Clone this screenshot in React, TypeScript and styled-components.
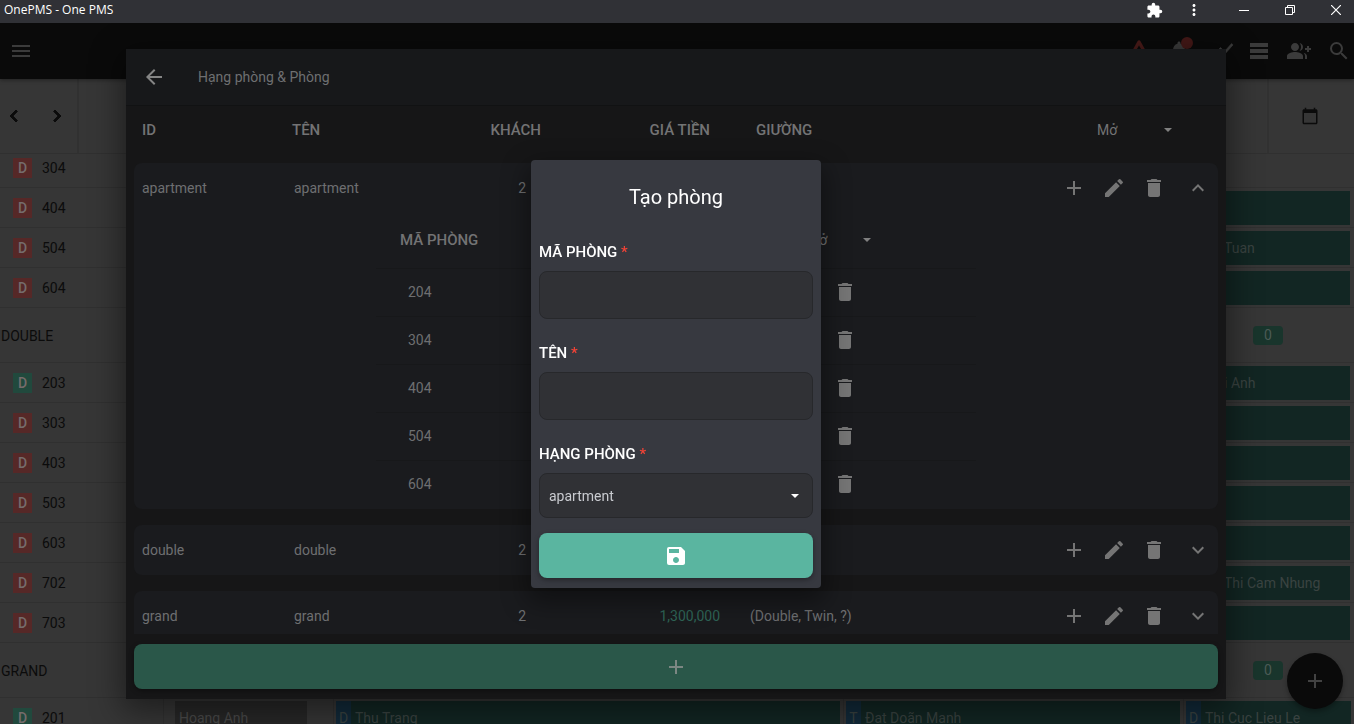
import React from 'react';
import styled, { createGlobalStyle } from 'styled-components';
import {
  MdAdd,
  MdArrowBack,
  MdCalendarToday,
  MdChevronLeft,
  MdChevronRight,
  MdDelete,
  MdEdit,
  MdExpandLess,
  MdExpandMore,
  MdExtension,
  MdGroupAdd,
  MdMenu,
  MdMoreVert,
  MdNotifications,
  MdSave,
  MdSearch,
  MdTableRows,
} from 'react-icons/md';

const GlobalStyle = createGlobalStyle`
  * { box-sizing: border-box; }
  html, body, #root { height: 100%; }
  body {
    margin: 0;
    overflow: hidden;
    background: #363636;
    color: #0b0b0b;
    font: 14px/20px Roboto, "Noto Sans", sans-serif;
  }
  button, input, select { font: inherit; color: inherit; }
  table { border-spacing: 0; }
`;

/* ---------- window frame ---------- */

const Window = styled.div`
  display: flex;
  flex-direction: column;
  height: 100vh;
`;

const TitleBar = styled.header`
  display: flex;
  align-items: center;
  flex: none;
  height: 23px;
  padding: 0 0 3px 4px;
  background: #303136;
  color: #fff;
  font: 12px/20px "Open Sans", "Noto Sans", sans-serif;
`;

const WindowTitle = styled.span`
  flex: 1;
`;

const WindowButtons = styled.div`
  display: flex;
  margin: 0 -5px 0 7px;
`;

const IconButton = styled.button<{ $w?: number; $h?: number }>`
  display: flex;
  align-items: center;
  justify-content: center;
  flex: none;
  width: ${(p) => p.$w ?? 40}px;
  height: ${(p) => p.$h ?? 40}px;
  padding: 0;
  border: 0;
  background: none;
  cursor: pointer;
`;

/* ---------- booking calendar behind the dialogs ---------- */

const Page = styled.main`
  position: relative;
  display: flex;
  flex-direction: column;
  flex: 1;
  min-height: 0;
  overflow: hidden;
`;

const AppBar = styled.nav`
  position: relative;
  z-index: 1;
  display: flex;
  align-items: center;
  flex: none;
  height: 56px;
  padding: 0 0 0 1px;
  background: #0a0a0a;
  color: #3b3b3b;
  box-shadow: 0 1px 4px rgba(0, 0, 0, 0.4);
`;

const Spacer = styled.div`
  flex: 1;
`;

const AppActions = styled.div`
  display: flex;
  margin-right: -5px;
`;

const AlertButton = styled(IconButton)`
  color: #4a1b19;
`;

const BellWrap = styled.span`
  position: relative;
  display: flex;
`;

const BellDot = styled.span`
  position: absolute;
  top: -2px;
  right: -2px;
  width: 12px;
  height: 12px;
  border-radius: 50%;
  background: #441817;
`;

const DateBar = styled.div`
  display: flex;
  flex: none;
  height: 75px;
  border-bottom: 1px solid #303030;
`;

const DateNav = styled.div`
  display: flex;
  align-items: center;
  justify-content: space-between;
  width: 79px;
  border-right: 2px solid #313131;

  path:last-child { stroke-width: 1px; }
`;

const DatePick = styled.div`
  display: flex;
  align-items: center;
  justify-content: center;
  width: 87px;
  padding-right: 4px;
  border-left: 2px solid #313131;
`;

const Rooms = styled.div`
  flex: 1;
  min-height: 0;
  overflow: hidden;
`;

const RoomList = styled.div`
  margin-top: -6px;
`;

const RoomRow = styled.div<{ $group?: boolean }>`
  display: flex;
  height: ${(p) => (p.$group ? 55 : 40)}px;
  border-bottom: 1px solid #303030;
`;

const RoomLabel = styled.div<{ $group?: boolean }>`
  display: flex;
  align-items: center;
  gap: 10px;
  flex: none;
  width: 163px;
  padding: ${(p) => (p.$group ? '2px 0 0 1px' : '0 0 0 13px')};
`;

const StateChip = styled.span<{ $clean?: boolean }>`
  width: 19px;
  height: 20px;
  background: ${(p) => (p.$clean ? '#21493d' : '#562827')};
  color: #756c6c;
  font-weight: 500;
  text-align: center;
`;

const Timeline = styled.div`
  display: grid;
  grid-template-columns: 170fr 510fr 340fr 171fr;
  flex: 1;
`;

const Slot = styled.div`
  display: flex;
  align-items: center;
  grid-column: 4;
  padding: 0 4px 0 3px;
`;

const Track = styled(Slot)<{ $inset?: boolean }>`
  grid-column: auto;
  padding: 2px ${(p) => (p.$inset ? '26px' : '3px')} 2px ${(p) => (p.$inset ? '11px' : '2px')};
  border-left: 1px solid #303030;
`;

const Booking = styled.div<{ $grey?: boolean; $cut?: boolean }>`
  display: flex;
  align-items: center;
  flex: 1;
  height: 34px;
  overflow: hidden;
  padding-left: ${(p) => (p.$grey ? 4 : p.$cut ? 38 : 0)}px;
  background: ${(p) => (p.$grey ? '#272727' : '#122623')};
  color: ${(p) => (p.$grey ? '#4a4a4a' : '#3a4341')};
  white-space: nowrap;
`;

const Source = styled.span`
  width: 15px;
  margin-right: 4px;
  background: #122a3a;
  line-height: 34px;
  text-align: center;
`;

const Count = styled.span`
  width: 30px;
  margin: 0 auto;
  border-radius: 4px;
  background: #19352c;
  color: #4c5b56;
  line-height: 19px;
  text-align: center;
`;

const Fab = styled.button`
  position: absolute;
  right: 11px;
  bottom: 15px;
  display: flex;
  align-items: center;
  justify-content: center;
  width: 56px;
  height: 56px;
  padding: 0;
  border: 0;
  border-radius: 50%;
  background: #0a0a0a;
  color: #424242;
  box-shadow: 0 3px 5px rgba(0, 0, 0, 0.3);
`;

/* ---------- room classes panel ---------- */

const Overlay = styled.div<{ $center?: boolean }>`
  position: absolute;
  inset: 0;
  z-index: 2;
  display: flex;
  justify-content: center;
  align-items: ${(p) => (p.$center ? 'center' : 'stretch')};
  padding: 26px 26px 25px 24px;
`;

const Panel = styled.section`
  display: flex;
  flex-direction: column;
  width: 100%;
  max-width: 1100px;
  background: #161617;
  color: #6e6f71;
  box-shadow: 0 8px 30px 4px rgba(0, 0, 0, 0.45);
`;

const PanelHead = styled.div`
  display: flex;
  align-items: center;
  flex: none;
  gap: 24px;
  height: 57px;
  padding-left: 8px;
  border-bottom: 1px solid #111213;
  background: #17181a;
`;

const BackButton = styled(IconButton)`
  color: #858585;
`;

const PanelTitle = styled.h1`
  margin: 0;
  font-size: 14px;
  font-weight: 400;
`;

const PanelScroll = styled.div`
  flex: 1;
  min-height: 0;
  margin: 0 8px;
  overflow: auto;
  scrollbar-width: none;
`;

const ClassTable = styled.table`
  display: block;
`;

const HeadRows = styled.thead`
  position: sticky;
  top: 0;
  display: block;
  background: #161617;
`;

const HeadRow = styled.tr`
  display: grid;
  grid-template-columns: 150px 150px 99px 169px minmax(0, 1fr) 83px;
  align-items: center;
  height: 57px;
  padding: 0 38px 10px 8px;
`;

const Th = styled.th<{ $right?: boolean; $pad?: number }>`
  padding: 0 0 0 ${(p) => p.$pad ?? 0}px;
  color: #737374;
  font-size: 15px;
  font-weight: 500;
  text-align: ${(p) => (p.$right ? 'right' : 'left')};
`;

const Card = styled.tbody`
  display: block;
  margin-bottom: 16px;
  padding: 1px 0;
  border-radius: 8px;
  background: #1a1b1e;
`;

const ClassRow = styled.tr`
  display: grid;
  grid-template-columns: 152px 150px 82px 194px minmax(0, 1fr) auto;
  align-items: center;
  height: 48px;
  padding-left: 8px;
`;

const Td = styled.td<{ $right?: boolean; $pad?: number; $price?: boolean }>`
  padding: 0 0 0 ${(p) => p.$pad ?? 0}px;
  color: ${(p) => (p.$price ? '#2f6557' : 'inherit')};
  text-align: ${(p) => (p.$right ? 'right' : 'left')};
`;

const ActionCell = styled.td`
  display: flex;
  padding: 0;
  color: #757575;
`;

const ExpandButton = styled(IconButton)`
  margin-left: 4px;
`;

const NestedRow = styled.tr`
  display: flex;
  justify-content: center;
`;

const NestedCell = styled.td`
  flex: 0 1 600px;
  padding: 0;
`;

const RoomTable = styled.table`
  display: block;
`;

const RoomRows = styled.tbody`
  display: block;
`;

const RoomGrid = styled.tr<{ $head?: boolean }>`
  display: grid;
  grid-template-columns: minmax(0, 1fr) 72px 97px;
  align-items: center;
  height: ${(p) => (p.$head ? 56 : 48)}px;
  padding-left: ${(p) => (p.$head ? 24 : 32)}px;
  box-shadow: ${(p) => (p.$head ? 'none' : 'inset 0 1px #17181a')};
`;

const RoomAction = styled.td`
  display: flex;
  justify-content: flex-end;
  grid-column: 2 / 4;
  padding: 0 111px 0 0;
  color: #757575;
`;

const PanelFoot = styled.div`
  flex: none;
  padding: 10px 8px;
`;

const WideButton = styled.button<{ $bright?: boolean }>`
  display: flex;
  align-items: center;
  justify-content: center;
  width: 100%;
  height: 45px;
  padding: 0;
  border: 0;
  border-radius: 8px;
  background: ${(p) => (p.$bright ? '#5ab5a0' : '#2a5749')};
  color: ${(p) => (p.$bright ? '#fff' : '#7c8783')};
  box-shadow: 0 2px 5px rgba(0, 0, 0, 0.35);
`;

/* ---------- selects: the caret shares the grid cell of the control ---------- */

const SelectBox = styled.span<{ $field?: boolean }>`
  display: grid;
  align-items: center;
  width: 100%;
  color: ${(p) => (p.$field ? '#c9cbd0' : '#737374')};
  font-size: 14px;
  font-weight: 400;

  > * { grid-area: 1 / 1; }
  > svg {
    justify-self: end;
    margin-right: ${(p) => (p.$field ? 14 : 8)}px;
    color: ${(p) => (p.$field ? '#fff' : '#808080')};
    pointer-events: none;
  }
`;

const Select = styled.select<{ $field?: boolean }>`
  appearance: none;
  width: 100%;
  height: ${(p) => (p.$field ? 45 : 24)}px;
  padding: 0 0 0 ${(p) => (p.$field ? 9 : 0)}px;
  border: ${(p) => (p.$field ? '1px solid #27282b' : '0')};
  border-radius: ${(p) => (p.$field ? 8 : 0)}px;
  background: ${(p) => (p.$field ? '#303135' : 'none')};
`;

/* ---------- create room dialog ---------- */

const Dialog = styled.section`
  width: 100%;
  max-width: 290px;
  padding: 23px 8px 10px;
  border-radius: 4px;
  background: #373940;
  color: #fff;
  box-shadow: 0 10px 26px 4px rgba(0, 0, 0, 0.4);
`;

const DialogTitle = styled.h2`
  margin: 0 0 31px;
  font-size: 20px;
  font-weight: 400;
  line-height: 28px;
  text-align: center;
`;

const Form = styled.form`
  display: flex;
  flex-direction: column;
  gap: 24px;
`;

const FormEnd = styled.div`
  display: flex;
  flex-direction: column;
  gap: 15px;
`;

const Field = styled.div`
  display: flex;
  flex-direction: column;
  gap: 9px;
`;

const Label = styled.label`
  font-size: 15px;
  font-weight: 500;
`;

const Required = styled.span`
  color: #f44336;
`;

const TextInput = styled.input`
  width: 100%;
  height: 48px;
  padding: 0 9px;
  border: 1px solid #27282b;
  border-radius: 8px;
  background: #303135;
`;

/* ---------- pieces ---------- */

const Caret = () => (
  <svg width="8" height="4" viewBox="0 0 8 4" aria-hidden="true">
    <path d="M0 0h8L4 4z" fill="currentColor" />
  </svg>
);

const AlertIcon = () => (
  <svg width="24" height="24" viewBox="0 0 24 24" aria-hidden="true">
    <path
      d="M12 3L2.5 20h19z"
      fill="none"
      stroke="currentColor"
      strokeWidth="3.4"
      strokeLinejoin="round"
    />
  </svg>
);

const ChartIcon = () => (
  <svg width="32" height="32" viewBox="0 0 32 32" aria-hidden="true">
    <path
      transform="translate(8 3)"
      fill="currentColor"
      stroke="currentColor"
      strokeWidth="0.6"
      d="M3.5 18.49l6-6.01 4 4L22 6.92l-1.41-1.41-7.09 7.97-4-4L2 16.99z"
    />
  </svg>
);

const StatusSelect = ({ label }: { label: string }) => (
  <SelectBox>
    <Select aria-label={label} defaultValue="open">
      <option value="open">Mở</option>
      <option value="closed">Đóng</option>
    </Select>
    <Caret />
  </SelectBox>
);

type CalendarRow = { name: string; group?: boolean; clean?: boolean; guest?: string };

const calendar: CalendarRow[] = [
  { name: '304' },
  { name: '404', guest: '' },
  { name: '504', guest: 'Tuan' },
  { name: '604', guest: '' },
  { name: 'DOUBLE', group: true },
  { name: '203', clean: true, guest: 'i Anh' },
  { name: '303', guest: '' },
  { name: '403', guest: '' },
  { name: '503', guest: '' },
  { name: '603', guest: '' },
  { name: '702', guest: 'Thi Cam Nhung' },
  { name: '703', guest: '' },
  { name: 'GRAND', group: true },
];

const RoomActions = ({ open }: { open?: boolean }) => (
  <ActionCell>
    <IconButton aria-label="Thêm phòng"><MdAdd size={24} /></IconButton>
    <IconButton aria-label="Sửa"><MdEdit size={24} /></IconButton>
    <IconButton aria-label="Xóa"><MdDelete size={24} /></IconButton>
    <ExpandButton aria-label="Mở rộng">
      {open ? <MdExpandLess size={24} /> : <MdExpandMore size={24} />}
    </ExpandButton>
  </ActionCell>
);

const ClassCells = ({ name, price, beds, open }: { name: string; price?: string; beds?: string; open?: boolean }) => (
  <ClassRow>
    <Td>{name}</Td>
    <Td>{name}</Td>
    <Td $right>2</Td>
    <Td $right $price>{price}</Td>
    <Td $pad={30}>{beds}</Td>
    <RoomActions open={open} />
  </ClassRow>
);

export default function App() {
  return (
    <Window>
      <GlobalStyle />
      <TitleBar>
        <WindowTitle>OnePMS - One PMS</WindowTitle>
        <IconButton $h={20} aria-label="Extensions"><MdExtension size={17} /></IconButton>
        <IconButton $h={20} aria-label="Menu"><MdMoreVert size={18} /></IconButton>
        <WindowButtons>
          <IconButton $w={46} $h={18} aria-label="Minimize">
            <svg width="10" height="10" viewBox="0 0 10 10"><path d="M0 5.5h10" stroke="currentColor" /></svg>
          </IconButton>
          <IconButton $w={46} $h={18} aria-label="Restore">
            <svg width="10" height="10" viewBox="0 0 10 10" fill="none" stroke="currentColor">
              <path d="M.5 2.5h7v7h-7zM2.5 2.5v-2h7v7h-2" />
            </svg>
          </IconButton>
          <IconButton $w={46} $h={18} aria-label="Close">
            <svg width="10" height="10" viewBox="0 0 10 10"><path d="M0 0l10 10M10 0L0 10" stroke="currentColor" strokeWidth="1.2" /></svg>
          </IconButton>
        </WindowButtons>
      </TitleBar>

      <Page>
        <AppBar>
          <IconButton aria-label="Menu"><MdMenu size={24} /></IconButton>
          <Spacer />
          <AppActions>
            <AlertButton aria-label="Cảnh báo"><AlertIcon /></AlertButton>
            <IconButton aria-label="Thông báo">
              <BellWrap><MdNotifications size={24} /><BellDot /></BellWrap>
            </IconButton>
            <IconButton aria-label="Báo cáo"><ChartIcon /></IconButton>
            <IconButton aria-label="Danh sách"><MdTableRows size={24} /></IconButton>
            <IconButton aria-label="Thêm khách"><MdGroupAdd size={24} /></IconButton>
            <IconButton aria-label="Tìm kiếm"><MdSearch size={24} /></IconButton>
          </AppActions>
        </AppBar>

        <DateBar>
          <DateNav>
            <IconButton $w={28} aria-label="Trước"><MdChevronLeft size={24} /></IconButton>
            <IconButton $w={40} aria-label="Sau"><MdChevronRight size={24} /></IconButton>
          </DateNav>
          <Spacer />
          <DatePick>
            <IconButton aria-label="Chọn ngày"><MdCalendarToday size={18} /></IconButton>
          </DatePick>
        </DateBar>

        <Rooms>
          <RoomList>
            {calendar.map((row) => (
              <RoomRow key={row.name} $group={row.group}>
                <RoomLabel $group={row.group}>
                  {!row.group && <StateChip $clean={row.clean}>D</StateChip>}
                  {row.name}
                </RoomLabel>
                <Timeline>
                  <Slot>
                    {row.group && <Count>0</Count>}
                    {row.guest !== undefined && <Booking $cut>{row.guest}</Booking>}
                  </Slot>
                </Timeline>
              </RoomRow>
            ))}
            <RoomRow>
              <RoomLabel><StateChip $clean>D</StateChip>201</RoomLabel>
              <Timeline>
                <Track $inset><Booking $grey>Hoang Anh</Booking></Track>
                <Track><Booking><Source>D</Source>Thu Trang</Booking></Track>
                <Track><Booking><Source>T</Source>Đạt Doãn Mạnh</Booking></Track>
                <Track><Booking><Source>D</Source>Thi Cuc Lieu Le</Booking></Track>
              </Timeline>
            </RoomRow>
          </RoomList>
        </Rooms>
        <Fab aria-label="Thêm"><MdAdd size={24} /></Fab>

        <Overlay>
          <Panel aria-label="Hạng phòng & Phòng">
            <PanelHead>
              <BackButton aria-label="Quay lại"><MdArrowBack size={24} /></BackButton>
              <PanelTitle>Hạng phòng &amp; Phòng</PanelTitle>
            </PanelHead>
            <PanelScroll>
              <ClassTable>
                <HeadRows>
                  <HeadRow>
                    <Th>ID</Th>
                    <Th>TÊN</Th>
                    <Th $right>KHÁCH</Th>
                    <Th $right>GIÁ TIỀN</Th>
                    <Th $pad={46}>GIƯỜNG</Th>
                    <Th><StatusSelect label="Trạng thái hạng phòng" /></Th>
                  </HeadRow>
                </HeadRows>
                <Card>
                  <ClassCells name="apartment" open />
                  <NestedRow>
                    <NestedCell>
                      <RoomTable>
                        <RoomRows>
                          <RoomGrid $head>
                            <Th>MÃ PHÒNG</Th>
                            <Th><StatusSelect label="Trạng thái phòng" /></Th>
                          </RoomGrid>
                          {['204', '304', '404', '504', '604'].map((id) => (
                            <RoomGrid key={id}>
                              <Td>{id}</Td>
                              <RoomAction>
                                <IconButton aria-label={`Xóa ${id}`}><MdDelete size={24} /></IconButton>
                              </RoomAction>
                            </RoomGrid>
                          ))}
                        </RoomRows>
                      </RoomTable>
                    </NestedCell>
                  </NestedRow>
                </Card>
                <Card><ClassCells name="double" /></Card>
                <Card><ClassCells name="grand" price="1,300,000" beds="(Double, Twin, ?)" /></Card>
              </ClassTable>
            </PanelScroll>
            <PanelFoot>
              <WideButton aria-label="Thêm hạng phòng"><MdAdd size={24} /></WideButton>
            </PanelFoot>
          </Panel>
        </Overlay>

        <Overlay $center>
          <Dialog role="dialog" aria-labelledby="create-title">
            <DialogTitle id="create-title">Tạo phòng</DialogTitle>
            <Form>
              <Field>
                <Label htmlFor="code">MÃ PHÒNG <Required>*</Required></Label>
                <TextInput id="code" type="text" />
              </Field>
              <Field>
                <Label htmlFor="name">TÊN <Required>*</Required></Label>
                <TextInput id="name" type="text" />
              </Field>
              <FormEnd>
                <Field>
                  <Label htmlFor="class">HẠNG PHÒNG <Required>*</Required></Label>
                  <SelectBox $field>
                    <Select $field id="class" defaultValue="apartment">
                      <option>apartment</option>
                      <option>double</option>
                      <option>grand</option>
                    </Select>
                    <Caret />
                  </SelectBox>
                </Field>
                <WideButton $bright type="submit" aria-label="Lưu"><MdSave size={24} /></WideButton>
              </FormEnd>
            </Form>
          </Dialog>
        </Overlay>
      </Page>
    </Window>
  );
}
